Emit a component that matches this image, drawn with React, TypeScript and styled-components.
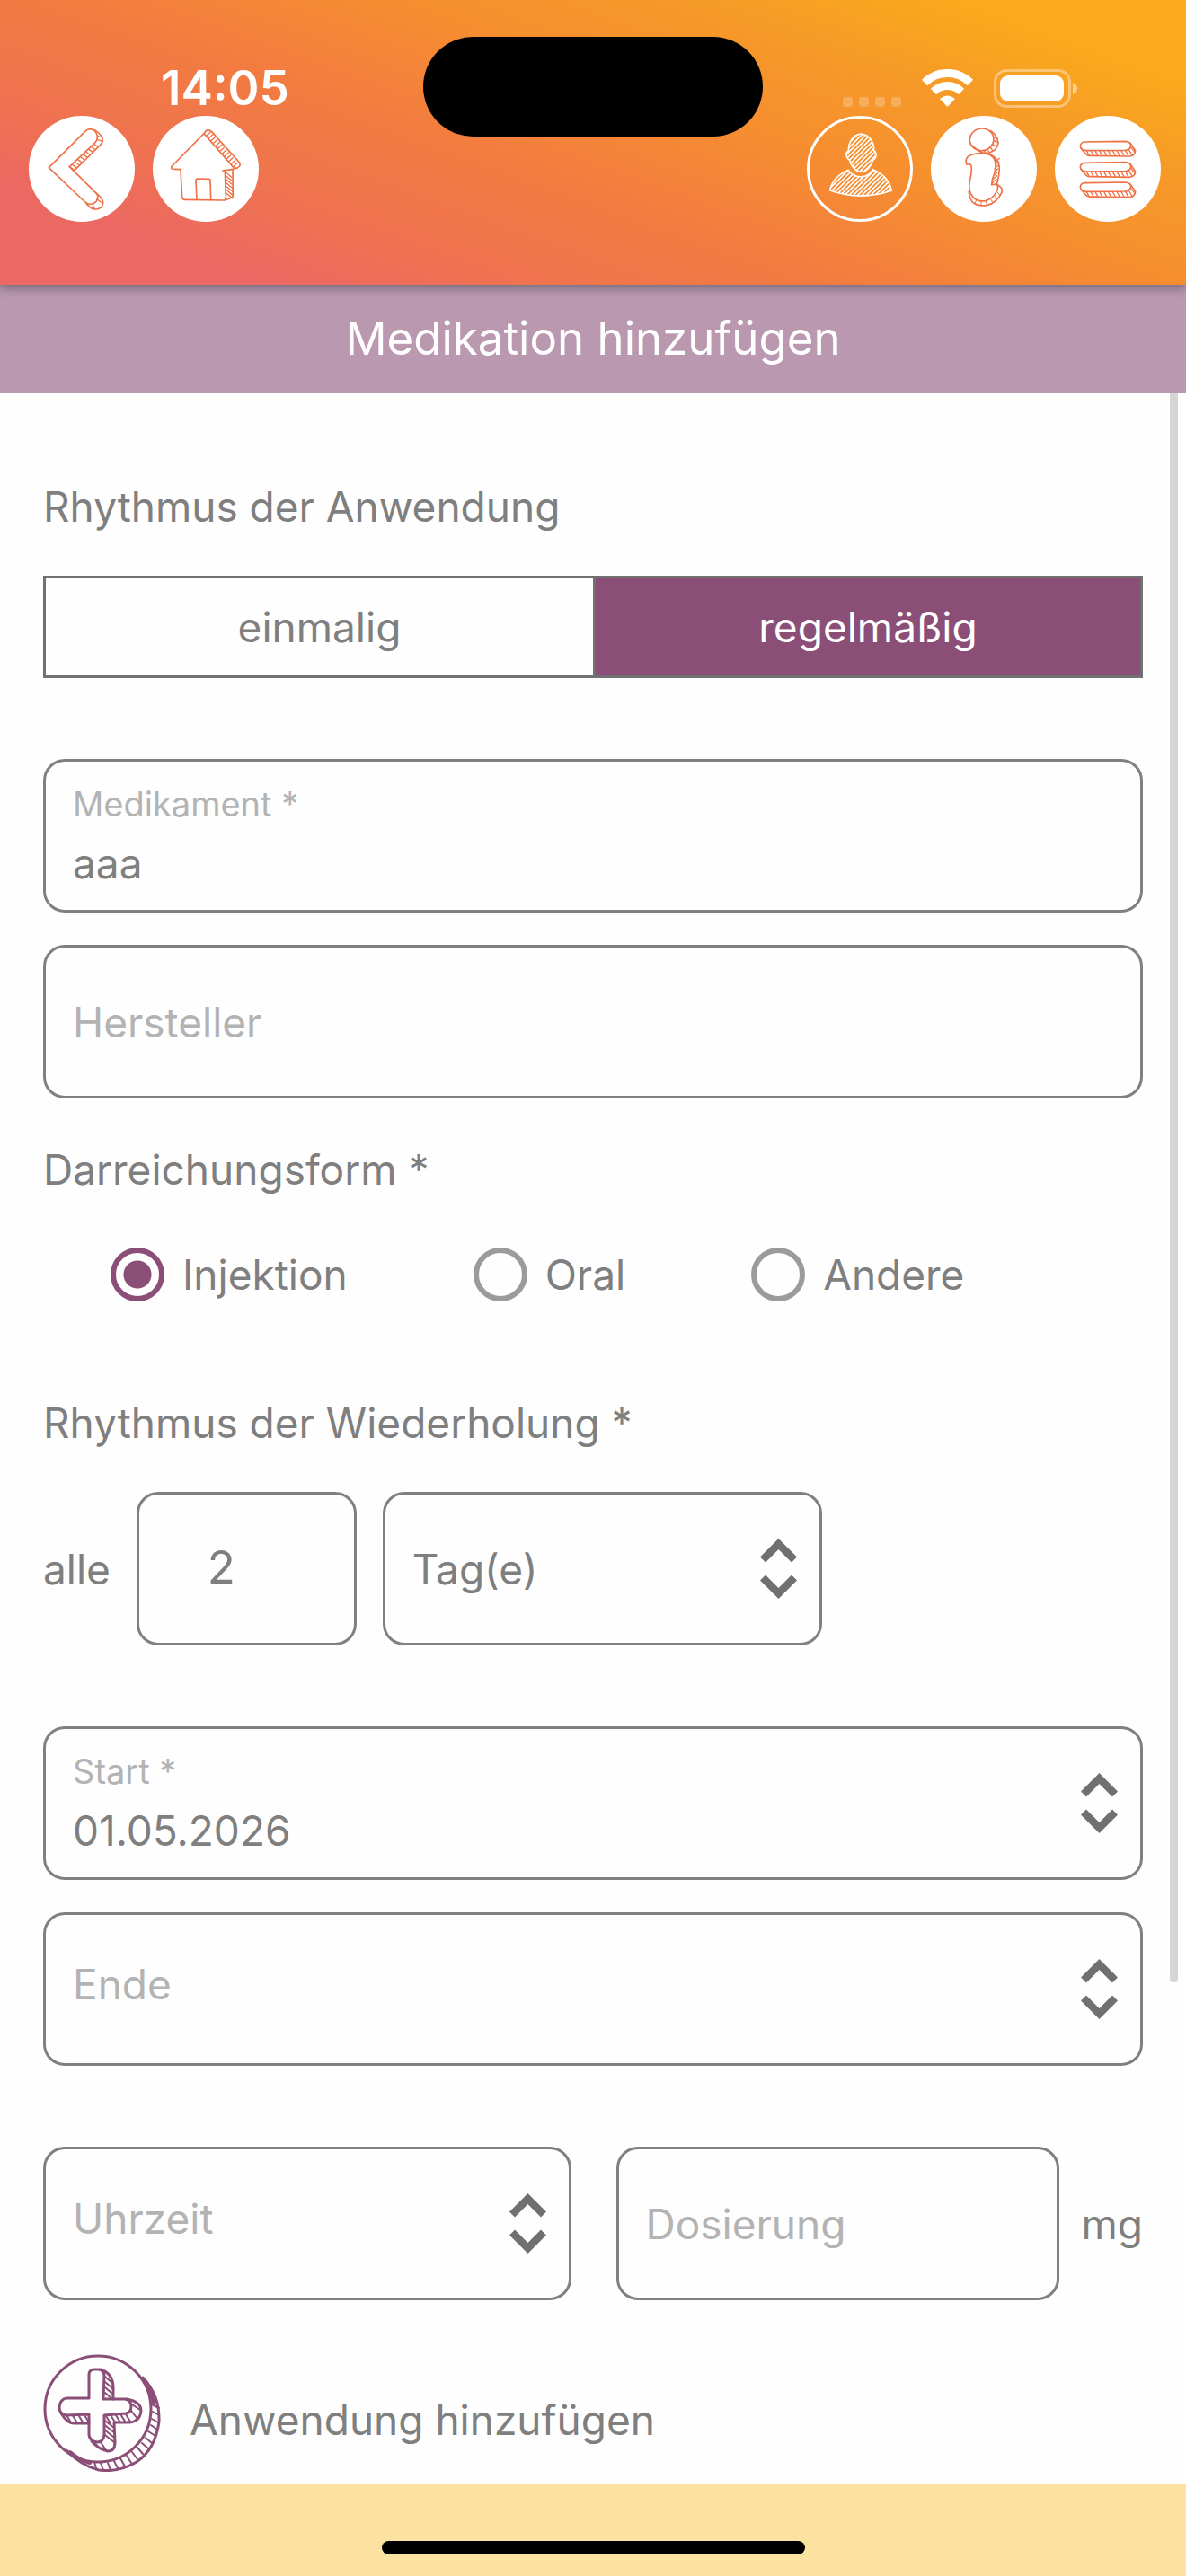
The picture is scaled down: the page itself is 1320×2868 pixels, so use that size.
import React, { useId, useState } from "react";
import styled, { createGlobalStyle, css } from "styled-components";

const color = {
  text: "#7f7f7f",
  hint: "#b3b3b3",
  line: "#808080",
  segmentLine: "#707070",
  plum: "#8a4e77",
  titleBar: "#b998b0",
  sketch: "#ef7145",
  footer: "#fce2a0",
};

const GlobalStyle = createGlobalStyle`
  *, *::before, *::after { box-sizing: border-box; }
  body {
    margin: 0;
    background: #fefefe;
    color: ${color.text};
    font-family: Inter, "Liberation Sans", sans-serif;
    font-size: 46px;
    line-height: 60px;
  }
  button, input, select { font: inherit; color: inherit; margin: 0; }
`;

const Page = styled.div`
  display: flex;
  flex-direction: column;
  min-height: 100vh;
`;

const Header = styled.header`
  position: relative;
  z-index: 1;
  height: 317px;
  background: linear-gradient(
    20deg,
    #ec6862 0%,
    #ec6862 14%,
    #ef744e 28%,
    #f27b41 42%,
    #f68e30 60%,
    #f69b27 76%,
    #fbab1b 89%
  );
  box-shadow: 0 4px 10px rgba(60, 60, 70, 0.5);
`;

const StatusBar = styled.div`
  display: flex;
  justify-content: space-between;
  align-items: center;
  height: 129px;
  padding: 67px 121px 0 179px;
`;

const Clock = styled.time`
  color: #fff;
  font-size: 53px;
  font-weight: 600;
`;

const Island = styled.div`
  position: absolute;
  top: 41px;
  left: 50%;
  width: 378px;
  height: 111px;
  margin-left: -189px;
  border-radius: 56px;
  background: #000;
`;

const Toolbar = styled.nav`
  display: flex;
  justify-content: space-between;
  padding: 0 28px 0 32px;
`;

const ToolGroup = styled.div`
  display: flex;
  gap: 20px;
`;

const RoundButton = styled.button<{ $outlined?: boolean }>`
  width: 118px;
  height: 118px;
  padding: 0;
  border: ${(p) => (p.$outlined ? "3px solid #fff" : "none")};
  border-radius: 50%;
  background: ${(p) => (p.$outlined ? "transparent" : "#fff")};
  color: ${(p) => (p.$outlined ? "#fff" : color.sketch)};
  svg {
    display: block;
    width: 118px;
    height: 118px;
    margin: ${(p) => (p.$outlined ? "-3px" : "0")};
  }
`;

const TitleBar = styled.h1`
  margin: 0;
  padding: 24px;
  height: 120px;
  background: ${color.titleBar};
  color: #fff;
  font-size: 51px;
  font-weight: 400;
  line-height: 72px;
  text-align: center;
`;

const Main = styled.main`
  position: relative;
  flex: 1;
  padding: 97px 48px 14px;
`;

const ScrollThumb = styled.div`
  position: absolute;
  top: 0;
  right: 9px;
  width: 9px;
  height: 76%;
  border-radius: 0 0 4px 4px;
  background: #d5d5d5;
`;

const Form = styled.form`
  display: flex;
  flex-direction: column;
`;

const Group = styled.section<{ $after: number }>`
  display: flex;
  flex-direction: column;
  gap: 36px;
  margin-bottom: ${(p) => p.$after}px;
`;

const Heading = styled.h2<{ $after: number }>`
  margin: 0 0 ${(p) => p.$after}px;
  font-size: inherit;
  font-weight: 400;
  line-height: inherit;
`;

const Segments = styled.div`
  display: grid;
  grid-template-columns: 1fr 1fr;
  height: 114px;
  margin-bottom: 90px;
  border: 3px solid ${color.segmentLine};
`;

const Segment = styled.button`
  border: 0;
  padding: 0;
  background: transparent;
  & + & { border-left: 3px solid ${color.segmentLine}; }
  &[aria-pressed="true"] {
    background: ${color.plum};
    color: #fff;
  }
`;

const frame = css`
  height: 171px;
  border: 3px solid ${color.line};
  border-radius: 24px;
  background: transparent;
`;

const Box = styled.div<{ $width?: string }>`
  ${frame}
  display: flex;
  align-items: center;
  min-width: 0;
  padding: 0 25px 0 30px;
  width: ${(p) => p.$width ?? "auto"};
`;

const BoxText = styled.div<{ $raised?: boolean }>`
  display: flex;
  flex: 1;
  flex-direction: column;
  gap: 12px;
  min-width: 0;
  padding-bottom: ${(p) => (p.$raised ? "12px" : "0")};
`;

const FloatingLabel = styled.label`
  color: ${color.hint};
  font-size: 38px;
  line-height: 48px;
`;

const TextInput = styled.input`
  width: 100%;
  height: 60px;
  padding: 0;
  border: 0;
  outline: 0;
  background: transparent;
  &::placeholder { color: ${color.hint}; opacity: 1; }
`;

const Select = styled.select`
  flex: 1;
  min-width: 0;
  height: 100%;
  padding: 0;
  border: 0;
  outline: 0;
  appearance: none;
  background: transparent;
`;

const CountInput = styled.input`
  ${frame}
  width: 20%;
  padding: 0 56px 4px 0;
  outline: 0;
  font-size: 51px;
  text-align: center;
`;

const RadioRow = styled.fieldset`
  display: flex;
  gap: 140px;
  margin: 0 0 105px;
  padding: 0 0 0 75px;
  border: 0;
`;

const RadioLabel = styled.label`
  display: flex;
  align-items: center;
  gap: 20px;
`;

const Radio = styled.input`
  appearance: none;
  width: 60px;
  height: 60px;
  margin: 0;
  border: 6px solid #9b9b9b;
  border-radius: 50%;
  &:checked {
    border-color: ${color.plum};
    background: radial-gradient(circle, ${color.plum} 15px, transparent 16px);
  }
`;

const Row = styled.div<{ $gap: number; $after: number }>`
  display: flex;
  align-items: center;
  gap: ${(p) => p.$gap}px;
  margin-bottom: ${(p) => p.$after}px;
`;

const Dose = styled.div`
  display: flex;
  flex: 1;
  align-items: center;
  gap: 24px;
  min-width: 0;
  ${Box} { flex: 1; }
`;

const AddButton = styled.button`
  display: flex;
  align-items: center;
  align-self: flex-start;
  gap: 32px;
  padding: 0;
  border: 0;
  background: transparent;
  svg { width: 131px; height: 131px; color: ${color.plum}; }
  span { padding-top: 14px; }
`;

const Footer = styled.footer`
  display: flex;
  flex-direction: column;
  justify-content: flex-end;
  align-items: center;
  height: 102px;
  padding-bottom: 24px;
  background: ${color.footer};
`;

const HomeIndicator = styled.div`
  width: 471px;
  height: 15px;
  border-radius: 8px;
  background: #000;
`;

/* Evenly spaced strokes from one line to another, as a pen hatching. */
function hatch(
  x1: number, y1: number, x2: number, y2: number,
  dx: number, dy: number, count: number,
) {
  return Array.from({ length: count }, (_, i) => {
    const t = count === 1 ? 0 : i / (count - 1);
    return `M${x1 + (x2 - x1) * t} ${y1 + (y2 - y1) * t}l${dx} ${dy}`;
  }).join("");
}

const pen = {
  fill: "none",
  stroke: "currentColor",
  strokeWidth: 5,
  strokeLinecap: "round" as const,
  strokeLinejoin: "round" as const,
};

const BackIcon = () => (
  <svg viewBox="96 387 354 354" aria-hidden="true" {...pen}>
    <path d="M163 560L284 439Q300 424 316 437Q329 450 323 468Q320 476 312 482L232 557L322 646Q331 656 322 672Q310 686 293 680Q285 676 278 669Z" />
    <path d="M316 434Q345 452 343 472Q340 481 330 489L249 569L232 557" />
    <path d="M322 646Q346 664 344 680Q338 700 316 699Q304 697 296 688L288 680" />
    <path strokeWidth={4} d={hatch(243, 551, 314, 482, 13, 9, 9) + "M324 466l18 6M326 455l15 3M310 684l6 14M324 665l13 10"} />
  </svg>
);

const HomeIcon = () => (
  <svg viewBox="510 387 354 354" aria-hidden="true" {...pen}>
    <path d="M573 564Q570 558 577 552L681 446L780 560Q790 566 800 555Q804 547 797 540L707 440Q697 430 687 438L681 446" />
    <path d="M580 565L603 566L608 660Q610 668 620 667L750 669Q754 666 754 660L751 569M743 570L780 565M777 568L778 655Q776 662 752 668" />
    <path d="M657 665L654 602Q654 597 660 597L698 598Q703 598 702 604L704 665" />
    <path strokeWidth={4} d={hatch(690, 453, 780, 556, 13, -12, 13) + hatch(753, 575, 755, 645, 22, 18, 7)} />
  </svg>
);

const HEAD =
  "M232 447C203 450 190 476 190 504C179 508 182 528 193 534C200 558 216 574 232 574C249 574 265 558 272 534C284 528 286 510 275 504C276 476 262 450 232 447Z";
const SHOULDERS =
  "M190 568C158 582 134 606 128 636Q230 672 334 637C328 605 305 580 272 566Q262 588 232 591Q202 588 190 568Z";

const PersonIcon = () => (
  <svg viewBox="51 387 354 354" aria-hidden="true" {...pen}>
    <clipPath id="person-shape">
      <path d={HEAD} />
      <path d={SHOULDERS} />
    </clipPath>
    <path d={HEAD} />
    <path d={SHOULDERS} />
    <g clipPath="url(#person-shape)">
      <path d={hatch(10, 660, 300, 660, 210, -210, 21)} />
    </g>
  </svg>
);

const InfoIcon = () => (
  <svg viewBox="468 387 354 354" aria-hidden="true" {...pen}>
    <ellipse cx="638" cy="466" rx="40" ry="37" transform="rotate(-12 638 466)" />
    <path d="M668 437Q690 452 693 478Q690 502 660 511Q640 514 628 504L602 484" />
    <path d="M587 549Q583 535 590 525Q606 512 636 512Q672 511 682 536Q688 556 679 582Q671 602 671 617L687 615Q694 620 690 636Q676 664 650 671Q620 674 607 656Q592 638 598 604Q606 572 603 553Q598 546 587 549Z" />
    <path d="M652 512Q694 522 697 562Q697 585 689 614M690 617Q708 626 706 640Q690 678 654 686Q622 690 606 674Q596 660 595 640" />
    <path strokeWidth={4} d={hatch(684, 540, 674, 610, 13, -11, 7) + "M634 504l6 7M645 502l6 8M656 498l6 9M666 491l7 10M673 481l12 8M678 470l14 6M676 458l14 4"} />
    <path strokeWidth={3} d="M690 642l8 10M680 654l8 10M668 664l6 12M652 671l3 13M636 673v13M620 668l-4 10" />
  </svg>
);

const MenuIcon = () => (
  <svg viewBox="882 387 354 354" aria-hidden="true" {...pen}>
    {[0, 70, 137].map((y) => (
      <g key={y} transform={`translate(0 ${y})`}>
        <path d="M983 474L1118 472Q1136 474 1136 487Q1134 500 1118 502L986 503Q967 500 967 488Q968 475 983 474Z" />
        <path d="M970 496L986 515Q991 521 1002 520L1132 522Q1150 519 1151 503L1133 477" />
        <path strokeWidth={4} d={hatch(988, 504, 1118, 503, 9, 16, 10) + "M1129 499l10 18M1135 491l13 16"} />
      </g>
    ))}
  </svg>
);

const PlusIcon = () => (
  <svg viewBox="0 0 131 131" aria-hidden="true" {...pen} strokeWidth={3}>
    <ellipse cx="61" cy="61" rx="59" ry="59" />
    <path d="M111 26Q130 46 129 75Q125 106 104 120Q84 132 62 129Q42 124 26 107" />
    <path strokeWidth={4} d="M30 109Q42 119 52 121M112 28Q121 42 123 54" />
    <path d="M51 23Q51 17 57 17H62Q68 18 68 24L67 50H91Q98 51 98 58Q98 65 92 66L68 68V90Q67 98 60 98Q52 97 51 90V67L26 68Q18 67 18 59Q19 50 26 49H51Z" />
    <path d="M64 17Q77 21 78 36V50M93 50Q109 53 109 63Q108 75 96 76H79L80 98Q80 108 72 108Q62 106 54 97M51 77H34Q27 77 20 66" />
    <path strokeWidth={2} d={
      hatch(69, 25, 69, 43, 8, 7, 4) + hatch(70, 69, 92, 67, 5, 8, 5) +
      "M98 63l7 9M99 56l9 6" + hatch(69, 74, 69, 90, 10, 8, 4) +
      "M64 98l6 9M57 98l4 5" + hatch(26, 68, 46, 68, 5, 8, 4) +
      "M121 56l8 4M122 64l7 4M121 72l7 4M120 79l7 5M117 86l8 5M114 93l7 6M110 99l7 6M105 104l6 7M99 109l6 8M93 113l5 8M86 116l5 9M79 119l4 8M72 121l3 8M64 121l3 8M57 120l2 7"
    } />
  </svg>
);

const StatusIcons = () => (
  <svg width="261" height="43" viewBox="0 0 261 43" fill="#fff" aria-hidden="true">
    {[0, 18, 36, 54].map((x) => (
      <rect key={x} x={x} y="31" width="11" height="11" rx="3" opacity=".22" />
    ))}
    <g fill="none" stroke="#fff" strokeWidth="9">
      <path d="M91 15A36 36 0 0 1 142 15" />
      <path d="M101 25A22 22 0 0 1 132 25" />
    </g>
    <path d="M108 33Q116.500 26 125 33L117.500 41Q116.500 42 115.500 41Z" />
    <rect x="169.500" y="1.500" width="83" height="40" rx="13" fill="none" stroke="#fff" strokeWidth="3" opacity=".38" />
    <rect x="175" y="7" width="71" height="29" rx="9" />
    <path d="M256 15Q261 17 261 21.500Q261 26 256 28Z" opacity=".5" />
  </svg>
);

const Chevrons = () => (
  <svg width="41" height="67" viewBox="0 0 41 67" fill={color.segmentLine} aria-hidden="true">
    <path d="M20.500 0L41 20.500L35 26.500L20.500 12L6 26.500L0 20.500Z" />
    <path d="M20.500 67L41 46.500L35 40.500L20.500 55L6 40.500L0 46.500Z" />
  </svg>
);

type FieldProps = {
  label: string;
  initial?: string;
  picker?: boolean;
  width?: string;
};

/* The label floats above the value, or stands in for it while it is empty. */
function Field({ label, initial = "", picker, width }: FieldProps) {
  const id = useId();
  const [value, setValue] = useState(initial);
  return (
    <Box $width={width}>
      <BoxText $raised={picker && !value}>
        {value && <FloatingLabel htmlFor={id}>{label}</FloatingLabel>}
        <TextInput
          id={id}
          aria-label={label}
          placeholder={label}
          value={value}
          onChange={(e) => setValue(e.target.value)}
        />
      </BoxText>
      {picker && <Chevrons />}
    </Box>
  );
}

const RHYTHMS = ["einmalig", "regelmäßig"];
const FORMS = ["Injektion", "Oral", "Andere"];

export default function App() {
  const [rhythm, setRhythm] = useState("regelmäßig");
  const [form, setForm] = useState("Injektion");
  const [count, setCount] = useState("2");

  return (
    <Page>
      <GlobalStyle />
      <Header>
        <StatusBar>
          <Clock>14:05</Clock>
          <StatusIcons />
        </StatusBar>
        <Island />
        <Toolbar>
          <ToolGroup>
            <RoundButton aria-label="Zurück"><BackIcon /></RoundButton>
            <RoundButton aria-label="Startseite"><HomeIcon /></RoundButton>
          </ToolGroup>
          <ToolGroup>
            <RoundButton aria-label="Profil" $outlined><PersonIcon /></RoundButton>
            <RoundButton aria-label="Info"><InfoIcon /></RoundButton>
            <RoundButton aria-label="Menü"><MenuIcon /></RoundButton>
          </ToolGroup>
        </Toolbar>
      </Header>
      <TitleBar>Medikation hinzufügen</TitleBar>
      <Main>
        <Form onSubmit={(e) => e.preventDefault()}>
          <Heading $after={47}>Rhythmus der Anwendung</Heading>
          <Segments>
            {RHYTHMS.map((name) => (
              <Segment
                key={name}
                type="button"
                aria-pressed={rhythm === name}
                onClick={() => setRhythm(name)}
              >
                {name}
              </Segment>
            ))}
          </Segments>

          <Group $after={49}>
            <Field label="Medikament *" initial="aaa" />
            <Field label="Hersteller" />
          </Group>

          <Heading $after={57} id="form-heading">Darreichungsform *</Heading>
          <RadioRow aria-labelledby="form-heading">
            {FORMS.map((name) => (
              <RadioLabel key={name}>
                <Radio
                  type="radio"
                  name="form"
                  checked={form === name}
                  onChange={() => setForm(name)}
                />
                {name}
              </RadioLabel>
            ))}
          </RadioRow>

          <Heading $after={47}>Rhythmus der Wiederholung *</Heading>
          <Row $gap={29} $after={90}>
            <label htmlFor="count">alle</label>
            <CountInput
              id="count"
              inputMode="numeric"
              value={count}
              onChange={(e) => setCount(e.target.value)}
            />
            <Box $width="40%">
              <Select aria-label="Einheit" defaultValue="Tag(e)">
                <option>Tag(e)</option>
              </Select>
              <Chevrons />
            </Box>
          </Row>

          <Group $after={90}>
            <Field label="Start *" initial="01.05.2026" picker />
            <Field label="Ende" picker />
          </Group>

          <Row $gap={50} $after={60}>
            <Field label="Uhrzeit" picker width="48%" />
            <Dose>
              <Field label="Dosierung" />
              <span>mg</span>
            </Dose>
          </Row>

          <AddButton type="button">
            <PlusIcon />
            <span>Anwendung hinzufügen</span>
          </AddButton>
        </Form>
        <ScrollThumb />
      </Main>
      <Footer>
        <HomeIndicator />
      </Footer>
    </Page>
  );
}
